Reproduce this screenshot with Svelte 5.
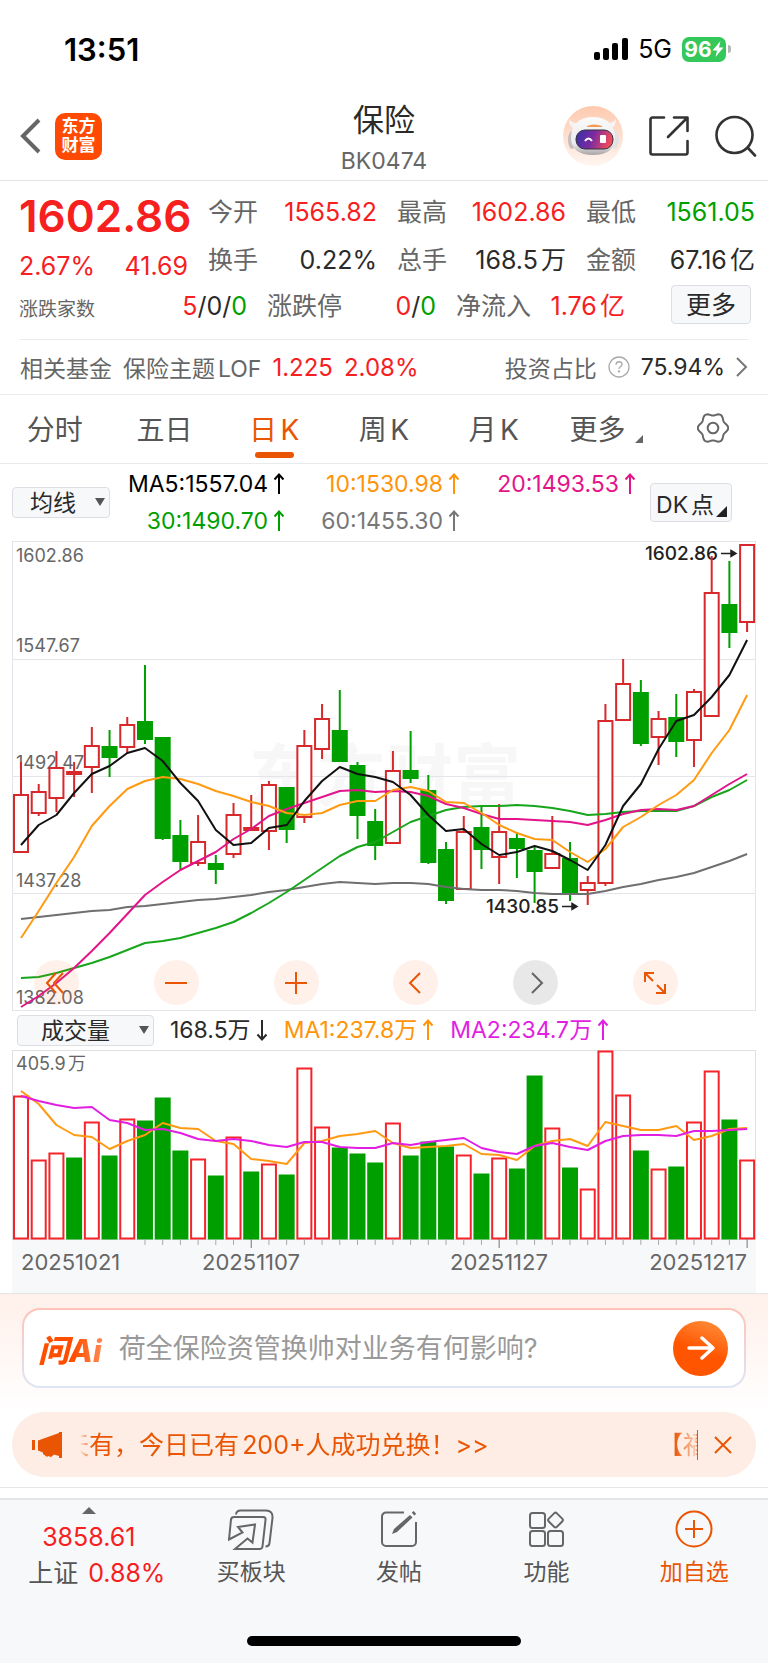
<script lang="ts">
	type Candle = [high: number, top: number, bottom: number, low: number, up: 0 | 1]

	const STEP = 17.71
	const cx = (i: number) => 21 + i * STEP
	const line = (ys: number[]) => ys.map((y, i) => `${cx(i).toFixed(1)},${y}`).join(' ')

	const candles: Candle[] = [
		[762, 795, 852, 852, 1], [784, 792, 813, 816, 1], [751, 768, 798, 812, 1],
		[762, 772, 774, 797, 1], [727, 746, 767, 793, 1], [730, 747, 757, 777, 0],
		[717, 725, 747, 753, 1], [665, 722, 739, 744, 0], [737, 738, 838, 840, 0],
		[820, 836, 861, 870, 0], [815, 842, 863, 866, 1], [855, 864, 869, 884, 0],
		[803, 815, 854, 858, 1], [795, 828, 830, 831, 1], [781, 785, 831, 850, 1],
		[787, 788, 829, 843, 0], [730, 746, 817, 823, 1], [704, 719, 749, 759, 1],
		[690, 731, 761, 761, 0], [762, 766, 815, 839, 0], [809, 822, 845, 860, 0],
		[751, 771, 843, 843, 1], [731, 771, 778, 783, 0], [775, 791, 862, 864, 0],
		[842, 850, 900, 904, 0], [816, 832, 889, 890, 1], [806, 828, 849, 869, 0],
		[804, 832, 857, 884, 1], [832, 839, 848, 878, 0], [846, 851, 871, 903, 0],
		[816, 854, 868, 868, 1], [842, 859, 894, 901, 0], [876, 883, 890, 905, 1],
		[704, 721, 883, 886, 1], [659, 684, 720, 720, 1], [680, 693, 743, 746, 0],
		[711, 719, 737, 765, 1], [694, 718, 741, 757, 0], [689, 692, 740, 767, 1],
		[556, 593, 716, 717, 1], [561, 605, 632, 648, 0], [544, 545, 622, 632, 1],
	]

	const averages = [
		{ color: '#6f6f6f', ys: [919, 917, 915, 913, 911, 910, 907, 906, 904, 902, 900, 899, 897, 895, 892, 890, 887, 884, 882, 883, 884, 883, 883, 884, 887, 889, 890, 890, 891, 893, 894, 894, 894, 891, 887, 884, 880, 877, 873, 867, 861, 854] },
		{ color: '#17a61b', ys: [978, 977, 973, 968, 963, 957, 950, 943, 941, 938, 933, 928, 922, 913, 903, 892, 880, 868, 856, 847, 842, 832, 822, 816, 810, 807, 806, 806, 805, 806, 808, 811, 815, 814, 812, 811, 811, 811, 806, 797, 790, 780] },
		{ color: '#e3148a', ys: [1007, 996, 983, 968, 951, 933, 914, 895, 882, 870, 861, 852, 839, 829, 816, 809, 803, 797, 791, 790, 792, 791, 792, 796, 804, 808, 814, 819, 819, 820, 821, 822, 825, 820, 814, 810, 809, 810, 806, 795, 784, 774] },
		{ color: '#ff9a12', ys: [938, 911, 883, 857, 826, 806, 789, 781, 777, 779, 784, 791, 796, 802, 806, 813, 815, 813, 805, 801, 801, 790, 787, 791, 802, 803, 813, 825, 833, 839, 840, 852, 862, 849, 827, 817, 805, 795, 780, 753, 730, 695] },
		{ color: '#111', ys: [845, 825, 815, 793, 774, 766, 753, 748, 761, 783, 801, 830, 845, 843, 828, 825, 801, 781, 767, 774, 777, 782, 795, 815, 831, 829, 844, 855, 852, 846, 851, 860, 870, 845, 806, 784, 749, 721, 715, 697, 675, 640] },
	]

	const volumes = [
		1096, 1160, 1153, 1158, 1122, 1156, 1119, 1121, 1098, 1151, 1159, 1176, 1137, 1172,
		1164, 1175, 1068, 1127, 1148, 1154, 1163, 1123, 1156, 1142, 1147, 1155, 1174, 1158,
		1169, 1076, 1128, 1168, 1189, 1051, 1095, 1151, 1169, 1167, 1122, 1071, 1120, 1160,
	]
	// flat days whose volume column is green although the candle is red
	const flatDays = [3, 13]

	const volumeAverages = [
		{ color: '#ff9a12', ys: [1091, 1104, 1125, 1135, 1137, 1149, 1141, 1135, 1123, 1128, 1129, 1141, 1144, 1159, 1161, 1164, 1143, 1141, 1136, 1134, 1131, 1143, 1148, 1147, 1146, 1144, 1154, 1155, 1160, 1146, 1141, 1139, 1146, 1122, 1126, 1130, 1130, 1126, 1140, 1136, 1129, 1128] },
		{ color: '#e31ee3', ys: [1096, 1101, 1105, 1108, 1107, 1120, 1123, 1130, 1129, 1133, 1139, 1141, 1139, 1141, 1145, 1147, 1142, 1142, 1147, 1148, 1148, 1143, 1145, 1142, 1140, 1138, 1148, 1152, 1154, 1146, 1143, 1147, 1150, 1141, 1136, 1135, 1135, 1136, 1131, 1131, 1130, 1129] },
	]

	const ticks = Array.from({ length: 35 }, (_, i) => i + 7)

	const priceLabels = [
		{ y: 562, text: '1602.86' },
		{ y: 652, text: '1547.67' },
		{ y: 769, text: '1492.47' },
		{ y: 887, text: '1437.28' },
		{ y: 1004, text: '1382.08' },
	]

	const stats = [
		{ label: '今开', value: '1565.82', tone: 'up' },
		{ label: '最高', value: '1602.86', tone: 'up' },
		{ label: '最低', value: '1561.05', tone: 'down' },
		{ label: '换手', value: '0.22%', tone: '' },
		{ label: '总手', value: '168.5万', tone: '' },
		{ label: '金额', value: '67.16亿', tone: '' },
	]

	const legend = [
		{ tone: 'ma5', text: 'MA5:1557.04' },
		{ tone: 'ma10', text: '10:1530.98' },
		{ tone: 'ma20', text: '20:1493.53' },
		{ tone: 'ma30', text: '30:1490.70' },
		{ tone: 'ma60', text: '60:1455.30' },
	]

	const periods = ['分时', '五日', '日K', '周K', '月K']
	let period = $state('日K')

	// six-lobed outline of the settings cog
	const cog = Array.from({ length: 72 }, (_, i) => {
		const a = (i * Math.PI) / 36
		const r = 13.8 + 1.4 * Math.cos(6 * a)
		return `${(16 + r * Math.cos(a)).toFixed(2)},${(16 + r * Math.sin(a)).toFixed(2)}`
	}).join(' ')
</script>

{#snippet trend(down = false)}
	<svg class="trend" width="12" height="22" viewBox="0 0 12 22" role="img" aria-label={down ? '下降' : '上升'}>
		<path d={down ? 'M6 1v19M1.500 15.500 6 20.500l4.500-5' : 'M6 21V2M1.500 6.500 6 1.500l4.500 5'} />
	</svg>
{/snippet}

<div class="screen">
	<div class="status">
		<span class="clock">13:51</span>
		<div class="status-icons">
			<svg width="34" height="22" viewBox="0 0 34 22" aria-hidden="true">
				<rect x="0" y="14" width="6" height="8" rx="2" />
				<rect x="9" y="10" width="6" height="12" rx="2" />
				<rect x="18" y="5" width="6" height="17" rx="2" />
				<rect x="28" y="0" width="6" height="22" rx="2" />
			</svg>
			<span class="network">5G</span>
			<span class="battery">
				96<svg width="12" height="18" viewBox="0 0 12 18" aria-hidden="true"><path d="M8.500 1 0.500 10.500H5L3.500 17 11.500 7.500H7z" fill="#fff" /></svg>
			</span>
		</div>
	</div>

	<header class="header">
		<div class="header-left">
			<button aria-label="返回">
				<svg width="22" height="36" viewBox="0 0 22 36" fill="none" stroke="#666" stroke-width="4"><path d="M20 2 4 18 20 34" /></svg>
			</button>
			<a class="brand" href="#home">东方<br />财富</a>
		</div>
		<div class="title">
			<h1>保险</h1>
			<p>BK0474</p>
		</div>
		<div class="header-right">
			<button aria-label="智能助手">
				<svg width="60" height="60" viewBox="0 0 60 60">
					<defs>
						<linearGradient id="halo" x1="0" y1="0" x2="0" y2="1">
							<stop offset="0" stop-color="#fdc9ae" /><stop offset="1" stop-color="#fff6f1" />
						</linearGradient>
						<linearGradient id="visor" x1="0" y1="0" x2="1" y2="0.2">
							<stop offset="0" stop-color="#3432a8" /><stop offset="0.5" stop-color="#7a2aa0" /><stop offset="1" stop-color="#f04a5c" />
						</linearGradient>
						<linearGradient id="shell" x1="0" y1="0" x2="0" y2="1">
							<stop offset="0" stop-color="#fafafa" /><stop offset="0.7" stop-color="#ececee" /><stop offset="1" stop-color="#aaa3a6" />
						</linearGradient>
					</defs>
					<circle cx="30" cy="30" r="30" fill="url(#halo)" />
					<path d="M6 13c0 6 2 9 9 11l5-7c-7 1-11 0-14-4zM53 13c0 6-2 9-9 11l-5-7c7 1 11 0 14-4z" fill="#f5f3f3" />
					<ellipse cx="9" cy="34" rx="4" ry="9" fill="#c4bec1" />
					<ellipse cx="52" cy="34" rx="4" ry="9" fill="#e5e1e3" />
					<path d="M30 11c14 0 22 8 22 21 0 11-8 17-22 17S8 43 8 32c0-13 8-21 22-21z" fill="url(#shell)" />
					<path d="M24 20q7-3 15 0v1H24z" fill="#f29a55" />
					<rect x="13" y="24" width="37" height="19" rx="9" fill="url(#visor)" stroke="#33323d" />
					<path d="M22 35q3.500-5 7 0" fill="none" stroke="#fff" stroke-width="2" />
					<rect x="37" y="29" width="6" height="8" rx="1" fill="#fff" />
				</svg>
			</button>
			<button aria-label="分享">
				<svg width="40" height="40" viewBox="0 0 40 40" fill="none" stroke="#333" stroke-width="2.600" stroke-linecap="round" stroke-linejoin="round"><path d="M15 1.500H3.500a2 2 0 0 0-2 2v33a2 2 0 0 0 2 2h33a2 2 0 0 0 2-2V25M25 1.500h13.500V15M38 2 19 21" /></svg>
			</button>
			<button aria-label="搜索">
				<svg width="42" height="42" viewBox="0 0 42 42" fill="none" stroke="#333" stroke-width="2.600" stroke-linecap="round"><circle cx="19.500" cy="20" r="18" /><path d="m33 33 7 7.500" /></svg>
			</button>
		</div>
	</header>

	<section class="quote">
		<div class="quote-main">
			<div class="last">
				<strong>1602.86</strong>
				<div><span>2.67%</span><span>41.69</span></div>
			</div>
			<dl class="stats">
				{#each stats as s (s.label)}
					<div><dt>{s.label}</dt><dd class={s.tone}>{s.value}</dd></div>
				{/each}
			</dl>
		</div>
		<div class="breadth">
			<div class="wide"><small>涨跌家数</small><span><i class="up">5</i>/0/<i class="down">0</i></span></div>
			<div><b>涨跌停</b><span><i class="up">0</i>/<i class="down">0</i></span></div>
			<div><b>净流入</b><span class="up">1.76亿</span></div>
			<button class="chip">更多</button>
		</div>
	</section>

	<a class="fund" href="#fund">
		<span>相关基金</span>
		<span>保险主题LOF</span>
		<span class="up">1.225</span>
		<span class="up">2.08%</span>
		<span class="ratio">投资占比</span>
		<svg width="22" height="22" viewBox="0 0 22 22" fill="none" stroke="#aaa" stroke-width="1.300" aria-hidden="true"><circle cx="11" cy="11" r="10" /><path d="M8 8.800c0-4 6-4 6-.4 0 2.200-3 2.200-3 4.600" /><circle cx="11" cy="15.500" r=".5" /></svg>
		<span class="dark">75.94%</span>
		<svg width="12" height="20" viewBox="0 0 12 20" fill="none" stroke="#777" stroke-width="2" aria-hidden="true"><path d="m1 1 9 9-9 9" /></svg>
	</a>

	<nav class="periods">
		{#each periods as p (p)}
			<button class:active={period === p} onclick={() => (period = p)}>{p}</button>
		{/each}
		<button class="more">更多<svg width="8" height="8" viewBox="0 0 8 8" aria-hidden="true"><path d="M8 0v8H0z" fill="#666" /></svg></button>
		<button aria-label="设置">
			<svg width="32" height="32" viewBox="0 0 32 32" fill="none" stroke="#666" stroke-width="2"><polygon points={cog} /><circle cx="16" cy="16" r="5.300" /></svg>
		</button>
	</nav>

	<section class="chart">
		<div class="legend">
			<div class="picker narrow">
				<select aria-label="主图指标"><option>均线</option></select>
			</div>
			<div class="ma">
				{#each legend as l (l.tone)}
					<span class={l.tone}>{l.text}{@render trend()}</span>
				{/each}
			</div>
			<button class="chip dk">DK点<svg width="11" height="11" viewBox="0 0 11 11" aria-hidden="true"><path d="M11 0v11H0z" fill="#222" /></svg></button>
		</div>

		<div class="plot">
			<svg viewBox="12 541 744 470" role="img" aria-label="日K线">
				<text class="watermark" x="249" y="801">东方财富</text>
				<g class="grid">
					<path d="M12 659.500h744M12 776.500h744M12 893.500h744" />
					<rect x="12.500" y="541.500" width="743" height="469" />
				</g>
				{#each priceLabels as l (l.y)}
					<text class="axis" x="16" y={l.y}>{l.text}</text>
				{/each}
				<text class="mark" x="718" y="560" text-anchor="end">1602.86</text>
				<path class="arrow" d="M721 553.500h15m-5-3 5 3-5 3z" />
				<text class="mark" x="559" y="913" text-anchor="end">1430.85</text>
				<path class="arrow" d="M562 906.500h15m-5-3 5 3-5 3z" />
				{#each candles as [high, top, bottom, low, up], i}
					<g class={up ? 'rise' : 'fall'}>
						<path d="M{cx(i)} {high}V{top}M{cx(i)} {bottom}V{low}" />
						<rect x={cx(i) - 7} y={top} width="14" height={bottom - top} />
					</g>
				{/each}
				{#each averages as a (a.color)}
					<polyline points={line(a.ys)} stroke={a.color} />
				{/each}
			</svg>
			<div class="controls">
				<button aria-label="最早">
					<svg width="22" height="22" viewBox="0 0 22 22"><path d="M10 1 1 11l9 10M17 1 8 11l9 10" /></svg>
				</button>
				<button aria-label="缩小">
					<svg width="22" height="22" viewBox="0 0 22 22"><path d="M0 11h22" /></svg>
				</button>
				<button aria-label="放大">
					<svg width="22" height="22" viewBox="0 0 22 22"><path d="M0 11h22M11 0v22" /></svg>
				</button>
				<button aria-label="左移">
					<svg width="22" height="22" viewBox="0 0 22 22"><path d="M15 1 5 11l10 10" /></svg>
				</button>
				<button class="off" aria-label="右移">
					<svg width="22" height="22" viewBox="0 0 22 22"><path d="m7 1 10 10L7 21" /></svg>
				</button>
				<button aria-label="全屏">
					<svg width="22" height="22" viewBox="0 0 22 22"><path d="M1 10V1h9M1 1l8 8M21 12v9h-9M21 21l-8-8" /></svg>
				</button>
			</div>
		</div>

		<div class="volume-head">
			<div class="picker">
				<select aria-label="副图指标"><option>成交量</option></select>
			</div>
			<span class="dark">168.5万{@render trend(true)}</span>
			<span class="ma10">MA1:237.8万{@render trend()}</span>
			<span class="vol2">MA2:234.7万{@render trend()}</span>
		</div>

		<svg class="volume" viewBox="12 1050 744 243" role="img" aria-label="成交量">
			<rect x="12" y="1239" width="744" height="54" fill="#f7f8fa" />
			<rect x="12.500" y="1050.500" width="743" height="189" fill="none" stroke="#dfe0e4" />
			<text class="axis" x="16" y="1070">405.9万</text>
			{#each volumes as y, i}
				<rect
					class={candles[i][4] && !flatDays.includes(i) ? 'vrise' : 'fall'}
					x={cx(i) - 7}
					y={y + 0.5}
					width="14"
					height={1238 - y}
				/>
			{/each}
			{#each volumeAverages as a (a.color)}
				<polyline points={line(a.ys)} stroke={a.color} />
			{/each}
			{#each ticks as t (t)}
				<path d="M{cx(t)} 1239v{t % 14 === 13 ? 9 : 6}" stroke={t % 14 === 13 ? '#777' : '#aaa'} />
			{/each}
			<g class="dates">
				<text x="21" y="1270">20251021</text>
				<text x="251" y="1270" text-anchor="middle">20251107</text>
				<text x="499" y="1270" text-anchor="middle">20251127</text>
				<text x="747" y="1270" text-anchor="end">20251217</text>
			</g>
		</svg>
	</section>

	<section class="ask">
		<form class="ask-box">
			<span class="ask-logo">问Ai</span>
			<input aria-label="问Ai" placeholder="荷全保险资管换帅对业务有何影响?" />
			<button type="button" aria-label="提问">
				<svg width="28" height="26" viewBox="0 0 28 26" fill="none" stroke="#fff" stroke-width="3.500" stroke-linecap="round" stroke-linejoin="round"><path d="M2 13h23M15 3l11 10-11 10" /></svg>
			</button>
		</form>
	</section>

	<div class="notice">
		<svg width="30" height="26" viewBox="0 0 30 26" fill="#ea5504" aria-hidden="true"><path d="M0 8h3v10H0zM6 8.500 27 1V0h3v26h-3v-2l-5-1.500-3 2.500-3-1-1 1-4-3v-1.500l-5-2z" /></svg>
		<a class="marquee" href="#notice"><span>天有，今日已有200+人成功兑换！&gt;&gt;</span><span class="next">【福</span></a>
		<button aria-label="关闭">
			<svg width="18" height="18" viewBox="0 0 18 18" fill="none" stroke="#ea5504" stroke-width="2"><path d="m1 1 16 16M17 1 1 17" /></svg>
		</button>
	</div>

	<footer class="bottom">
		<nav>
			<a class="index" href="#index">
				<svg width="14" height="7" viewBox="0 0 14 7" aria-hidden="true"><path d="M7 0l7 7H0z" fill="#666" /></svg>
				<span class="up">3858.61</span>
				<span class="change">上证<i class="up">0.88%</i></span>
			</a>
			<a href="#buy">
				<svg width="46" height="42" viewBox="0 0 46 42"><path d="M8 5.500Q8.500 1.500 12.500 1.500H38Q45 1.500 44.500 9L41.500 34Q41 37.500 37.500 37.500M3 10.500Q3.500 8 6 8H35Q38 8 37.500 11L34.500 37.500Q34.200 40 31.500 40H7L19.500 29.500 24.500 33.500 27 15.500 10 18 14.500 23.500 1 30.500z" /></svg>
				<span>买板块</span>
			</a>
			<a href="#post">
				<svg width="36" height="42" viewBox="0 0 36 42"><path d="M23 3.500H5a4 4 0 0 0-4 4V33a4 4 0 0 0 4 4h26a4 4 0 0 0 4-4V13" /><path d="m11 25 2-5L29 6l2.500 2.500L16 23z" fill="#666" stroke="none" /><path d="m32 5 2-1.500" stroke-width="4" /></svg>
				<span>发帖</span>
			</a>
			<a href="#features">
				<svg width="36" height="42" viewBox="0 0 36 42"><rect x="1" y="4" width="15" height="15" rx="2.500" /><rect x="1" y="22" width="15" height="15" rx="2.500" /><rect x="19" y="22" width="15" height="15" rx="2.500" /><rect x="20.800" y="5.300" width="11.500" height="11.500" rx="2" transform="rotate(45 26.500 11)" /></svg>
				<span>功能</span>
			</a>
			<a class="add" href="#add">
				<svg width="38" height="42" viewBox="0 0 38 42"><circle cx="19" cy="20" r="17.500" /><path d="M10 20h18M19 11v18" /></svg>
				<span>加自选</span>
			</a>
		</nav>
		<div class="home-bar"></div>
	</footer>
</div>

<style>
	:global(body) {
		margin: 0;
		background: #fff;
	}

	.screen {
		--red: #f6201f;
		--green: #009f00;
		--orange: #ea5504;
		--text: #2a2a2a;
		--muted: #666;
		--rule: #e9eaed;

		color: var(--text);
		font-family: Inter, 'Noto Sans CJK SC', sans-serif;
		font-size: 25px;
		text-autospace: normal;
	}

	button {
		background: none;
		border: 0;
		color: inherit;
		font: inherit;
		padding: 0;
	}

	a {
		color: inherit;
		text-decoration: none;
	}

	i,
	b {
		font-style: normal;
		font-weight: 400;
	}

	svg {
		display: block;
		flex: none;
	}

	.up {
		color: var(--red);
	}

	.down {
		color: var(--green);
	}

	.dark {
		color: var(--text);
	}

	.status {
		align-items: center;
		color: #000;
		display: flex;
		height: 98px;
		justify-content: space-between;
		padding: 0 37px 0 64px;
	}

	.clock {
		font-size: 31px;
		font-weight: 600;
	}

	.status-icons {
		align-items: center;
		display: flex;
		gap: 10px;
	}

	.battery {
		align-items: center;
		background: #34c759;
		border-radius: 7px;
		color: #fff;
		display: flex;
		font-size: 21px;
		font-weight: 700;
		height: 25px;
		justify-content: center;
		margin-right: 5px;
		position: relative;
		width: 44px;
	}

	.battery::after {
		background: #b5b5b5;
		border-radius: 0 3px 3px 0;
		content: '';
		height: 8px;
		position: absolute;
		right: -5px;
		top: 8px;
		width: 3px;
	}

	.header {
		align-items: center;
		border-bottom: 1px solid #e4e4e4;
		display: grid;
		grid-template-columns: 1fr auto 1fr;
		height: 82px;
	}

	.header-left,
	.header-right {
		align-items: center;
		display: flex;
		padding-bottom: 6px;
	}

	.header-left {
		gap: 14px;
		padding-left: 19px;
	}

	.header-right {
		gap: 26px;
		justify-content: flex-end;
		padding-right: 11px;
	}

	.brand {
		background: #ff4a03;
		border-radius: 10px;
		box-sizing: border-box;
		color: #fff;
		font-size: 17px;
		font-weight: 700;
		height: 47px;
		line-height: 19px;
		padding-top: 4px;
		text-align: center;
		width: 47px;
	}

	.title {
		text-align: center;
	}

	.title h1 {
		font-size: 31px;
		font-weight: 400;
		line-height: 44px;
		margin: 0;
	}

	.title p {
		color: var(--muted);
		font-size: 23px;
		line-height: 38px;
		margin: 0;
	}

	.quote {
		padding: 4px 13px 15px 19px;
	}

	.quote-main {
		display: flex;
		gap: 16px;
	}

	.last {
		color: var(--red);
		width: 173px;
	}

	.last strong {
		display: block;
		font-size: 44px;
		font-weight: 600;
		line-height: 62px;
	}

	.last div {
		display: flex;
		justify-content: space-between;
		line-height: 38px;
		padding-right: 4px;
	}

	.stats {
		column-gap: 20px;
		display: grid;
		flex: 1;
		grid-template-columns: repeat(3, 1fr);
		line-height: 47px;
		margin: 0;
		padding-top: 4px;
	}

	.stats div {
		display: flex;
		justify-content: space-between;
	}

	.stats dt,
	.breadth b,
	.breadth small {
		color: var(--muted);
	}

	.stats dd {
		margin: 0;
	}

	.breadth {
		display: flex;
		gap: 20px;
		height: 39px;
		line-height: 43px;
	}

	.breadth div {
		display: flex;
		justify-content: space-between;
		width: 169px;
	}

	.breadth .wide {
		width: 228px;
	}

	.breadth small {
		font-size: 19px;
		line-height: 50px;
	}

	.chip {
		background: #f7f8fa;
		border: 1px solid #dcdee3;
		border-radius: 4px;
	}

	.breadth .chip {
		height: 39px;
		line-height: 36px;
		margin: 0 4px 0 auto;
		width: 80px;
	}

	.fund {
		align-items: center;
		border-top: 1px solid var(--rule);
		color: var(--muted);
		display: flex;
		font-size: 23px;
		gap: 11px;
		height: 54px;
		margin: 0 20px;
	}

	.fund .up {
		font-size: 24px;
	}

	.fund .ratio {
		margin-left: auto;
	}

	.periods {
		border-bottom: 1px solid var(--rule);
		border-top: 1px solid var(--rule);
		color: #555;
		display: grid;
		font-size: 28px;
		grid-template-columns: repeat(7, 1fr);
		height: 68px;
	}

	.periods button {
		align-items: center;
		display: flex;
		justify-content: center;
		padding-bottom: 3px;
		position: relative;
	}

	.periods .active {
		color: var(--orange);
	}

	.periods .active::after {
		background: var(--orange);
		border-radius: 3px;
		bottom: 5px;
		content: '';
		height: 6px;
		position: absolute;
		width: 39px;
	}

	.periods .more {
		padding-left: 6px;
	}

	.more svg {
		align-self: flex-end;
		margin: 0 0 17px 10px;
	}

	.chart {
		margin: 0 12px;
	}

	.legend {
		align-items: center;
		display: flex;
		font-size: 23px;
		height: 77px;
	}

	.picker {
		position: relative;
		width: 137px;
	}

	.picker.narrow {
		width: 98px;
	}

	.picker select {
		appearance: none;
		background: #f7f8fa;
		border: 1px solid #dcdee3;
		border-radius: 4px;
		color: var(--text);
		display: block;
		font: inherit;
		height: 31px;
		line-height: 28px;
		padding: 0 20px 0 23px;
		width: 100%;
	}

	.picker.narrow select {
		padding: 0 20px 0 17px;
	}

	.picker::after {
		border: 5px solid transparent;
		border-top: 8px solid #555;
		border-bottom: 0;
		content: '';
		pointer-events: none;
		position: absolute;
		right: 5px;
		top: 11px;
	}

	.ma {
		display: grid;
		flex: 1;
		grid-template-columns: 175px 175px 176px;
		line-height: 37px;
		text-align: right;
	}

	.trend {
		display: inline-block;
		fill: none;
		margin-left: 5px;
		stroke: currentColor;
		stroke-width: 2;
		vertical-align: -3px;
	}

	.ma5 {
		color: #000;
	}

	.ma10 {
		color: #ff9408;
	}

	.ma20 {
		color: #e3148a;
	}

	.ma30 {
		color: var(--green);
	}

	.ma60 {
		color: #777;
	}

	.vol2 {
		color: #e31ee3;
	}

	.dk {
		height: 39px;
		margin-right: 24px;
		padding-right: 12px;
		position: relative;
		width: 82px;
	}

	.dk svg {
		bottom: 4px;
		position: absolute;
		right: 4px;
	}

	.plot {
		position: relative;
	}

	.plot > svg,
	.volume {
		width: 100%;
	}

	.watermark {
		fill: #f7f7f8;
		font-size: 68px;
		font-weight: 700;
	}

	.grid {
		fill: none;
		stroke: #e3e5ea;
	}

	.axis {
		fill: #666;
		font-size: 18px;
	}

	.mark {
		fill: #222;
		font-size: 19px;
		font-weight: 500;
	}

	.arrow {
		fill: #222;
		stroke: #222;
		stroke-width: 1.5;
	}

	.rise {
		fill: #fff;
		stroke: #d7282b;
		stroke-width: 2;
	}

	.fall {
		fill: var(--green);
		stroke: var(--green);
		stroke-width: 2;
	}

	.vrise {
		fill: #fff;
		stroke: #f5242a;
		stroke-width: 2;
	}

	polyline {
		fill: none;
		stroke-linejoin: round;
		stroke-width: 2;
	}

	.controls {
		bottom: 6px;
		display: flex;
		justify-content: space-between;
		left: 22px;
		position: absolute;
		right: 78px;
	}

	.controls button {
		background: rgb(255 85 10 / 0.09);
		border-radius: 50%;
		display: grid;
		height: 45px;
		place-items: center;
		width: 45px;
	}

	.controls svg {
		fill: none;
		stroke: var(--orange);
		stroke-width: 2;
	}

	.controls .off {
		background: rgb(0 0 0 / 0.09);
	}

	.controls .off svg {
		stroke: #666;
	}

	.volume-head {
		align-items: center;
		display: flex;
		font-size: 23px;
		gap: 16px;
		height: 39px;
		line-height: 37px;
		padding-left: 5px;
		text-autospace: no-autospace;
	}

	.dates {
		fill: #666;
		font-size: 22px;
	}

	.ask {
		background: linear-gradient(#fff0ea, #fff);
		border-top: 1px solid #e3e4e8;
		padding: 14px 22px 24px;
	}

	.ask-box {
		align-items: center;
		background:
			linear-gradient(#fff, #fff) padding-box,
			linear-gradient(#ffc3b8, #dfe5f5) border-box;
		border: 2px solid transparent;
		border-radius: 18px;
		box-sizing: border-box;
		display: flex;
		height: 80px;
		padding: 0 16px 0 14px;
	}

	.ask-logo {
		background: linear-gradient(90deg, #ff4e00 50%, #ff9a68);
		background-clip: text;
		color: transparent;
		font-size: 31px;
		font-style: italic;
		font-weight: 800;
		padding-right: 8px;
		text-autospace: no-autospace;
	}

	.ask-box input {
		background: none;
		border: 0;
		color: var(--text);
		flex: 1;
		font: inherit;
		font-size: 27px;
		min-width: 0;
		outline: 0;
		padding: 0 9px;
	}

	.ask-box input::placeholder {
		color: #999;
	}

	.ask-box button {
		background: linear-gradient(20deg, #ff5400 45%, #ff9440);
		border-radius: 50%;
		display: grid;
		height: 55px;
		place-items: center;
		width: 55px;
	}

	.notice {
		align-items: center;
		background: #feede4;
		border-radius: 32px;
		color: var(--orange);
		display: flex;
		height: 65px;
		margin: 0 12px 10px;
		padding: 0 24px 0 20px;
	}

	.marquee {
		border-right: 1px solid var(--orange);
		display: flex;
		flex: 1;
		justify-content: space-between;
		line-height: 30px;
		margin: 0 16px 0 18px;
		mask-image: linear-gradient(90deg, transparent, #000 12px, #000 calc(100% - 24px), rgb(0 0 0 / 0.2) calc(100% - 2px), #000 calc(100% - 1px));
		overflow: hidden;
		text-indent: -16px;
		white-space: nowrap;
	}

	.marquee .next {
		overflow: hidden;
		text-indent: 0;
		width: 39px;
	}

	.bottom {
		background: #f7f8fa;
		border-top: 2px solid #e4e6ea;
		box-shadow: 0 -10px 0 #fff, 0 -11px 0 #e4e6ea;
		margin-top: 21px;
	}

	.bottom nav {
		color: #555;
		display: grid;
		font-size: 23px;
		grid-template-columns: 178fr repeat(4, 148fr);
		height: 136px;
	}

	.bottom a {
		align-items: center;
		display: flex;
		flex-direction: column;
		line-height: 36px;
		padding-top: 9px;
	}

	.bottom a svg {
		fill: none;
		margin-bottom: 3px;
		stroke: #666;
		stroke-width: 2;
	}

	.bottom .index {
		font-size: 25px;
		padding-top: 7px;
	}

	.bottom .index svg {
		margin-bottom: 5px;
		stroke: none;
	}

	.change {
		display: flex;
		gap: 10px;
		padding-left: 16px;
	}

	.bottom .add {
		color: var(--orange);
	}

	.bottom .add svg {
		stroke: var(--orange);
	}

	.home-bar {
		background: #000;
		border-radius: 5px;
		height: 10px;
		margin: 0 auto;
		width: 274px;
	}

	.bottom::after {
		content: '';
		display: block;
		height: 17px;
	}
</style>
